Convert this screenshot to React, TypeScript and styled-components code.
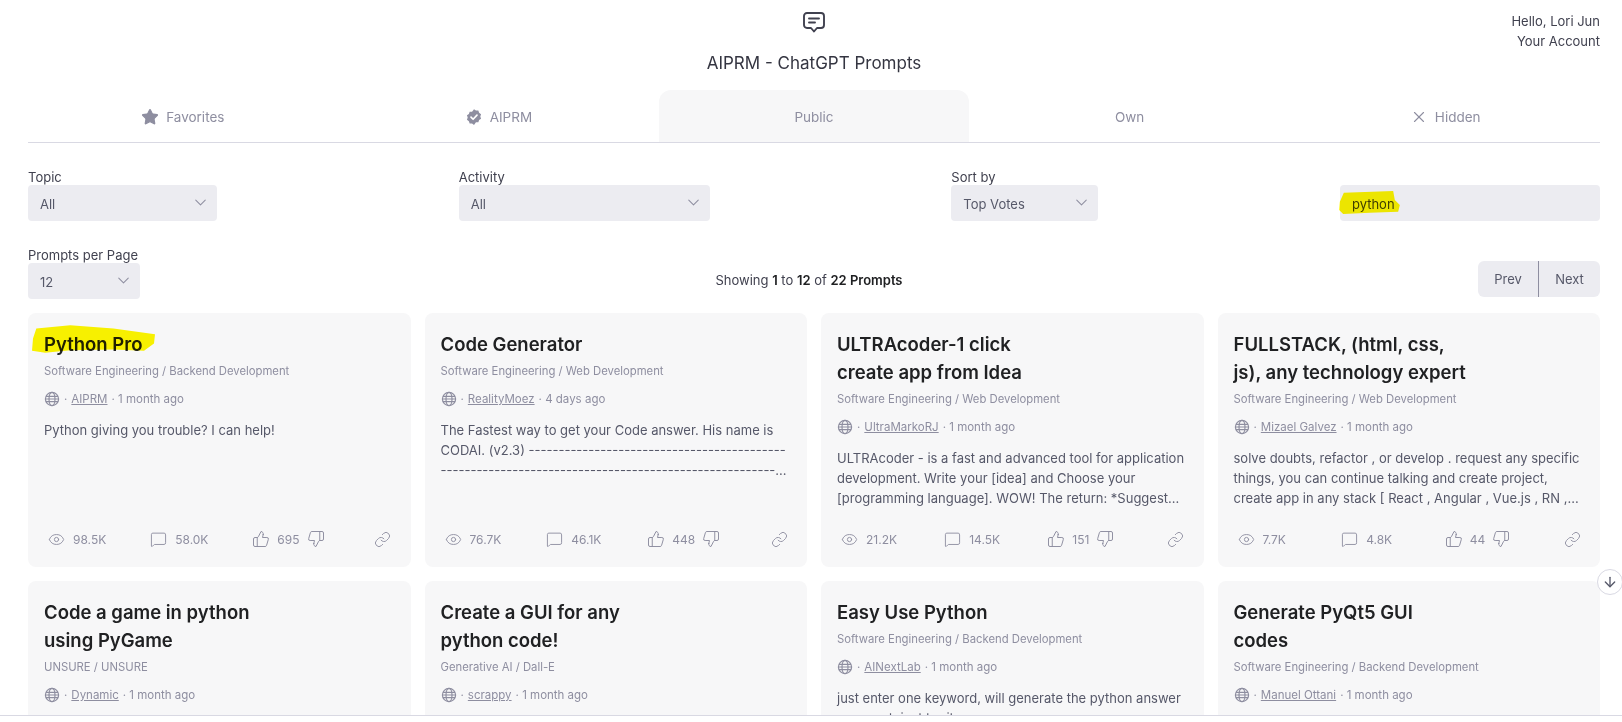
import React from 'react';
import styled, { createGlobalStyle } from 'styled-components';
import { ArrowDown, ChevronDown, Eye, Link, MessageSquare, Star, ThumbsDown, ThumbsUp, X } from 'lucide-react';

const GlobalStyle = createGlobalStyle`
  html, body {
    margin: 0;
    padding: 0;
    background: #ffffff;
    font-family: Inter, 'Noto Sans', sans-serif;
    color: #343541;
  }
  * {
    box-sizing: border-box;
  }
`;

const Page = styled.div`
  position: relative;
  display: flex;
  flex-direction: column;
  height: 722px;
  overflow: hidden;
  padding-bottom: 6px;
  background: #ffffff;
`;

const Content = styled.main`
  flex: 1;
  min-height: 0;
  overflow: hidden;
  padding: 0 22px 0 28px;
  border-bottom: 1px solid #d9d9e3;
`;

const Header = styled.header`
  display: grid;
  grid-template-columns: 1fr auto 1fr;
  height: 90px;
`;

const Brand = styled.div`
  grid-column: 2;
  display: flex;
  flex-direction: column;
  align-items: center;
  padding-top: 10px;
`;

const BrandTitle = styled.h1`
  margin: 15px 0 0;
  font-size: 17px;
  line-height: 28px;
  font-weight: 400;
  color: #343541;
`;

const Account = styled.div`
  grid-column: 3;
  padding-top: 11px;
  text-align: right;
  font-size: 13px;
  line-height: 20px;
  color: #40414f;
`;

const Tabs = styled.nav`
  display: grid;
  grid-template-columns: repeat(5, 1fr);
  column-gap: 6px;
  border-bottom: 1px solid #d9d9e3;
`;

const Tab = styled.div<{ $active?: boolean }>`
  display: flex;
  align-items: center;
  justify-content: center;
  gap: 7px;
  height: 52px;
  padding-top: 2px;
  font-size: 13.5px;
  color: #8e8ea0;
  border-radius: 12px 12px 0 0;
  background: ${(props) => (props.$active ? '#f7f7f8' : 'transparent')};
`;

const FilterRow = styled.div`
  display: flex;
  justify-content: space-between;
  align-items: flex-end;
  margin-top: 26px;
`;

const PagingRow = styled(FilterRow)``;

const Field = styled.div<{ $width: number }>`
  display: flex;
  flex-direction: column;
  width: ${(props) => props.$width}px;
`;

const FieldLabel = styled.label`
  font-size: 13px;
  line-height: 16px;
  color: #40414f;
`;

const Select = styled.div`
  display: flex;
  align-items: center;
  justify-content: space-between;
  height: 36px;
  padding: 1px 7px 0 12px;
  border-radius: 4px;
  background: #ececf1;
  font-size: 13px;
  color: #565869;

  svg {
    margin-top: -2px;
    color: #8e8ea0;
  }
`;

const SearchBox = styled.div`
  position: relative;
  width: 260px;
  height: 36px;
`;

const SearchInput = styled.input`
  width: 100%;
  height: 100%;
  padding: 1px 12px 0;
  border: none;
  outline: none;
  border-radius: 4px;
  background: #ececf1;
  font-family: inherit;
  font-size: 13px;
  color: #40414f;
`;

const Marker = styled.svg<{ $left: number; $top: number }>`
  position: absolute;
  left: ${(props) => props.$left}px;
  top: ${(props) => props.$top}px;
  fill: #fff800;
  mix-blend-mode: multiply;
  pointer-events: none;
`;

const Showing = styled.div`
  padding-bottom: 9px;
  font-size: 13px;
  line-height: 20px;
  color: #40414f;

  b {
    font-weight: 600;
    color: #202123;
  }
`;

const Pager = styled.div`
  display: flex;
  height: 36px;
  margin-bottom: 2px;
  border-radius: 6px;
  overflow: hidden;
  background: #ececf1;
`;

const PagerButton = styled.button`
  width: 60px;
  padding: 0;
  border: none;
  background: transparent;
  font-family: inherit;
  font-size: 13px;
  color: #565869;

  & + & {
    width: 62px;
    border-left: 1px solid #8e8ea0;
  }
`;

const CardGrid = styled.section`
  display: grid;
  grid-template-columns: repeat(4, 1fr);
  grid-auto-rows: 254px;
  gap: 14px;
  margin-top: 14px;
`;

const Card = styled.article`
  display: flex;
  flex-direction: column;
  padding: 17px 16px 16px;
  border-radius: 8px;
  background: #f7f7f8;
`;

const CardTitle = styled.h3`
  margin: 0;
  font-size: 18.5px;
  line-height: 28px;
  font-weight: 600;
  color: #202123;
  white-space: pre-line;
`;

const TitleText = styled.span`
  position: relative;
  display: inline-block;
`;

const CardTopic = styled.div`
  margin-top: 5px;
  font-size: 11.3px;
  line-height: 16px;
  color: #8e8ea0;
`;

const CardMeta = styled.div`
  display: flex;
  align-items: center;
  gap: 4px;
  margin-top: 12px;
  font-size: 11.5px;
  line-height: 16px;
  color: #8e8ea0;

  a {
    color: inherit;
    text-decoration: underline;
  }
`;

const CardText = styled.p`
  margin: 13px 0 0;
  font-size: 13px;
  line-height: 20px;
  color: #565869;
  overflow-wrap: anywhere;
`;

const CardFooter = styled.footer`
  display: flex;
  align-items: center;
  justify-content: space-between;
  margin-top: auto;
  height: 24px;
  padding: 0 3px 0 4px;
  font-size: 12px;
  color: #8e8ea0;
`;

const Stat = styled.span<{ $gap?: number }>`
  display: flex;
  align-items: center;
  gap: ${(props) => props.$gap ?? 8}px;
  min-width: 56px;
`;

const LinkButton = styled.span`
  display: flex;
  padding-left: 6px;
`;

const ScrollButton = styled.div`
  position: absolute;
  left: 1597px;
  top: 569px;
  display: flex;
  align-items: center;
  justify-content: center;
  width: 26px;
  height: 26px;
  border: 1px solid #d9d9e3;
  border-radius: 50%;
  background: #ffffff;
  color: #565869;
`;

const GlobeIcon = () => (
  <svg width="16" height="16" viewBox="0 0 16 16" fill="none" stroke="#8e8ea0" strokeWidth="1.2">
    <circle cx="8" cy="8" r="6.6" />
    <ellipse cx="8" cy="8" rx="3" ry="6.6" />
    <path d="M2 5.4h12M2 10.6h12M1.4 8h13.2" />
  </svg>
);

const ChatIcon = () => (
  <svg width="24" height="24" viewBox="0 0 24 24" fill="none" stroke="#40414f" strokeWidth="1.9" strokeLinejoin="round" strokeLinecap="round">
    <path d="M5 3h14a3 3 0 0 1 3 3v9a3 3 0 0 1-3 3h-4l-3 3.5L9 18H5a3 3 0 0 1-3-3V6a3 3 0 0 1 3-3z" />
    <path d="M7 8.500h10M7 12.500h6" />
  </svg>
);

const BadgeIcon = () => (
  <svg width="18" height="18" viewBox="0 0 24 24">
    <path
      fill="#8e8ea0"
      d="M12 1.500l2.600 1.900 3.200-.1 1 3 2.600 1.900-1 3 1 3-2.600 1.900-1 3-3.200-.1L12 22.500l-2.600-1.900-3.200.1-1-3-2.600-1.900 1-3-1-3 2.600-1.900 1-3 3.200.1z"
    />
    <path d="M8 12.200l2.800 2.800 5.200-5.500" fill="none" stroke="#ffffff" strokeWidth="2.200" strokeLinecap="round" strokeLinejoin="round" />
  </svg>
);

type Stats = { views: string; comments: string; votes: string };

type Prompt = {
  title: string;
  topic: string;
  author: string;
  age: string;
  text?: string;
  stats?: Stats;
  marked?: boolean;
};

const prompts: Prompt[] = [
  {
    title: 'Python Pro',
    topic: 'Software Engineering / Backend Development',
    author: 'AIPRM',
    age: '1 month ago',
    text: 'Python giving you trouble? I can help!',
    stats: { views: '98.5K', comments: '58.0K', votes: '695' },
    marked: true,
  },
  {
    title: 'Code Generator',
    topic: 'Software Engineering / Web Development',
    author: 'RealityMoez',
    age: '4 days ago',
    text: `The Fastest way to get your Code answer. His name is CODAI. (v2.3) ${'-'.repeat(43)} ${'-'.repeat(56)}\u2060...`,
    stats: { views: '76.7K', comments: '46.1K', votes: '448' },
  },
  {
    title: 'ULTRAcoder-1 click\ncreate app from Idea',
    topic: 'Software Engineering / Web Development',
    author: 'UltraMarkoRJ',
    age: '1 month ago',
    text: 'ULTRAcoder - is a fast and advanced tool for application development. Write your [idea] and Choose your [programming language]. WOW! The return: *Suggest...',
    stats: { views: '21.2K', comments: '14.5K', votes: '151' },
  },
  {
    title: 'FULLSTACK, (html, css,\njs), any technology expert',
    topic: 'Software Engineering / Web Development',
    author: 'Mizael Galvez',
    age: '1 month ago',
    text: 'solve doubts, refactor , or develop . request any specific things, you can continue talking and create project, create app in any stack [ React , Angular , Vue.js , RN ,...',
    stats: { views: '7.7K', comments: '4.8K', votes: '44' },
  },
  {
    title: 'Code a game in python\nusing PyGame',
    topic: 'UNSURE / UNSURE',
    author: 'Dynamic',
    age: '1 month ago',
  },
  {
    title: 'Create a GUI for any\npython code!',
    topic: 'Generative AI / Dall-E',
    author: 'scrappy',
    age: '1 month ago',
  },
  {
    title: 'Easy Use Python',
    topic: 'Software Engineering / Backend Development',
    author: 'AINextLab',
    age: '1 month ago',
    text: 'just enter one keyword, will generate the python answer you want, just try it',
  },
  {
    title: 'Generate PyQt5 GUI\ncodes',
    topic: 'Software Engineering / Backend Development',
    author: 'Manuel Ottani',
    age: '1 month ago',
  },
];

const PromptCard: React.FC<{ prompt: Prompt }> = ({ prompt }) => (
  <Card>
    <CardTitle>
      <TitleText>
        {prompt.marked && (
          <Marker $left={-12} $top={-5} width="123" height="28" viewBox="35 45 370 83">
            <path d="M48 55L150 45L280 55L405 72L402 100L372 122L280 118L150 120L75 128L35 122L38 85z" />
          </Marker>
        )}
        {prompt.title}
      </TitleText>
    </CardTitle>
    <CardTopic>{prompt.topic}</CardTopic>
    <CardMeta>
      <GlobeIcon />
      <span>·</span>
      <a href="#author">{prompt.author}</a>
      <span>· {prompt.age}</span>
    </CardMeta>
    {prompt.text && <CardText>{prompt.text}</CardText>}
    {prompt.stats && (
      <CardFooter>
        <Stat>
          <Eye size={17} strokeWidth={1.3} />
          {prompt.stats.views}
        </Stat>
        <Stat>
          <MessageSquare size={17} strokeWidth={1.3} />
          {prompt.stats.comments}
        </Stat>
        <Stat $gap={7}>
          <ThumbsUp size={18} strokeWidth={1.3} />
          {prompt.stats.votes}
          <ThumbsDown size={18} strokeWidth={1.3} />
        </Stat>
        <LinkButton>
          <Link size={17} strokeWidth={1.3} />
        </LinkButton>
      </CardFooter>
    )}
  </Card>
);

const App: React.FC = () => (
  <Page>
    <GlobalStyle />
    <Content>
      <Header>
        <Brand>
          <ChatIcon />
          <BrandTitle>AIPRM - ChatGPT Prompts</BrandTitle>
        </Brand>
        <Account>
          <div>Hello, Lori Jun</div>
          <div>Your Account</div>
        </Account>
      </Header>
      <Tabs>
        <Tab>
          <Star size={18} fill="#8e8ea0" strokeWidth={1.5} />
          Favorites
        </Tab>
        <Tab>
          <BadgeIcon />
          AIPRM
        </Tab>
        <Tab $active>Public</Tab>
        <Tab>Own</Tab>
        <Tab>
          <X size={18} strokeWidth={1.5} />
          Hidden
        </Tab>
      </Tabs>
      <FilterRow>
        <Field $width={189}>
          <FieldLabel>Topic</FieldLabel>
          <Select>
            All
            <ChevronDown size={19} strokeWidth={1.3} />
          </Select>
        </Field>
        <Field $width={251}>
          <FieldLabel>Activity</FieldLabel>
          <Select>
            All
            <ChevronDown size={19} strokeWidth={1.3} />
          </Select>
        </Field>
        <Field $width={147}>
          <FieldLabel>Sort by</FieldLabel>
          <Select>
            Top Votes
            <ChevronDown size={19} strokeWidth={1.3} />
          </Select>
        </Field>
        <SearchBox>
          <SearchInput defaultValue="python" />
          <Marker $left={-1} $top={6} width="61" height="23" viewBox="28 33 182 69">
            <path d="M42 38L190 33L195 60L210 75L205 95L120 98L40 102L28 90L30 65z" />
          </Marker>
        </SearchBox>
      </FilterRow>
      <PagingRow>
        <Field $width={112}>
          <FieldLabel>Prompts per Page</FieldLabel>
          <Select>
            12
            <ChevronDown size={19} strokeWidth={1.3} />
          </Select>
        </Field>
        <Showing>
          Showing <b>1</b> to <b>12</b> of <b>22 Prompts</b>
        </Showing>
        <Pager>
          <PagerButton>Prev</PagerButton>
          <PagerButton>Next</PagerButton>
        </Pager>
      </PagingRow>
      <CardGrid>
        {prompts.map((prompt) => (
          <PromptCard key={prompt.author} prompt={prompt} />
        ))}
      </CardGrid>
    </Content>
    <ScrollButton>
      <ArrowDown size={16} strokeWidth={2} />
    </ScrollButton>
  </Page>
);

export default App;
